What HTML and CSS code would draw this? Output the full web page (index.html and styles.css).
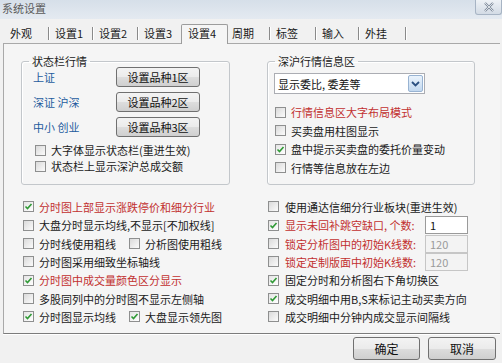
FILE: index.html
```html
<!DOCTYPE html>
<html lang="zh-CN">
<head>
    <meta charset="UTF-8">
    <title>系统设置</title>
    <link rel="stylesheet" href="styles.css">
</head>
<body>
<div class="window">
    <div class="titlebar">
        <span class="title">系统设置</span>
        <span class="close">
            <svg width="14" height="10" viewBox="0 0 14 10"><path d="M3 1 L11 9 M11 1 L3 9" stroke="#7d8a9a" stroke-width="2.2" fill="none"/><path d="M3 1 L11 9 M11 1 L3 9" stroke="#f4f6f8" stroke-width="0.8" fill="none"/></svg>
        </span>
    </div>

    <div class="tabs">
        <div class="tab">外观</div>
        <div class="tab">设置1</div>
        <div class="tab">设置2</div>
        <div class="tab">设置3</div>
        <div class="tab on">设置4</div>
        <div class="tab">周期</div>
        <div class="tab">标签</div>
        <div class="tab">输入</div>
        <div class="tab">外挂</div>
    </div>

    <div class="panel">
        <div class="groups">
            <fieldset class="group">
                <legend>状态栏行情</legend>
                <div class="gbody first">
                    <div class="pick"><span class="mkt">上证</span><span class="btn">设置品种1区</span></div>
                    <div class="pick"><span class="mkt">深证 沪深</span><span class="btn">设置品种2区</span></div>
                    <div class="pick"><span class="mkt">中小 创业</span><span class="btn">设置品种3区</span></div>
                    <div class="chkrow small"><span class="cb"></span>大字体显示状态栏(重进生效)</div>
                    <div class="chkrow small"><span class="cb"></span>状态栏上显示深沪总成交额</div>
                </div>
            </fieldset>
            <fieldset class="group">
                <legend>深沪行情信息区</legend>
                <div class="gbody second">
                    <div class="select">
                        <span class="seltext">显示委比, 委差等</span>
                        <span class="arrow"><svg width="9" height="6" viewBox="0 0 9 6"><path d="M1 1 L4.5 4.5 L8 1" stroke="#2a4f80" stroke-width="1.8" fill="none"/></svg></span>
                    </div>
                    <div class="chklist">
                        <div class="chkrow red"><span class="cb"></span>行情信息区大字布局模式</div>
                        <div class="chkrow"><span class="cb"></span>买卖盘用柱图显示</div>
                        <div class="chkrow"><span class="cb on"><svg width="9" height="9" viewBox="0 0 9 9"><path d="M1.5 4.5 L3.5 6.5 L7.5 2" stroke="#2f9a35" stroke-width="1.6" fill="none"/></svg></span>盘中提示买卖盘的委托价量变动</div>
                        <div class="chkrow"><span class="cb"></span>行情等信息放在左边</div>
                    </div>
                </div>
            </fieldset>
        </div>

        <div class="opts">
            <div class="col left">
                <div class="opt red"><span class="cb on"><svg width="9" height="9" viewBox="0 0 9 9"><path d="M1.5 4.5 L3.5 6.5 L7.5 2" stroke="#2f9a35" stroke-width="1.6" fill="none"/></svg></span>分时图上部显示涨跌停价和细分行业</div>
                <div class="opt"><span class="cb"></span>大盘分时显示均线,不显示[不加权线]</div>
                <div class="opt">
                    <span class="half"><span class="cb"></span>分时线使用粗线</span>
                    <span class="half"><span class="cb"></span>分析图使用粗线</span>
                </div>
                <div class="opt"><span class="cb"></span>分时图采用细致坐标轴线</div>
                <div class="opt red"><span class="cb on"><svg width="9" height="9" viewBox="0 0 9 9"><path d="M1.5 4.5 L3.5 6.5 L7.5 2" stroke="#2f9a35" stroke-width="1.6" fill="none"/></svg></span>分时图中成交量颜色区分显示</div>
                <div class="opt"><span class="cb"></span>多股同列中的分时图不显示左侧轴</div>
                <div class="opt">
                    <span class="half"><span class="cb on"><svg width="9" height="9" viewBox="0 0 9 9"><path d="M1.5 4.5 L3.5 6.5 L7.5 2" stroke="#2f9a35" stroke-width="1.6" fill="none"/></svg></span>分时图显示均线</span>
                    <span class="half"><span class="cb on"><svg width="9" height="9" viewBox="0 0 9 9"><path d="M1.5 4.5 L3.5 6.5 L7.5 2" stroke="#2f9a35" stroke-width="1.6" fill="none"/></svg></span>大盘显示领先图</span>
                </div>
            </div>
            <div class="col right">
                <div class="opt"><span class="cb"></span>使用通达信细分行业板块(重进生效)</div>
                <div class="opt red"><span class="cb on"><svg width="9" height="9" viewBox="0 0 9 9"><path d="M1.5 4.5 L3.5 6.5 L7.5 2" stroke="#2f9a35" stroke-width="1.6" fill="none"/></svg></span>显示未回补跳空缺口, 个数:<span class="num">1</span></div>
                <div class="opt red"><span class="cb"></span>锁定分析图中的初始K线数:<span class="num off">120</span></div>
                <div class="opt red"><span class="cb"></span>锁定定制版面中初始K线数:<span class="num off">120</span></div>
                <div class="opt"><span class="cb on"><svg width="9" height="9" viewBox="0 0 9 9"><path d="M1.5 4.5 L3.5 6.5 L7.5 2" stroke="#2f9a35" stroke-width="1.6" fill="none"/></svg></span>固定分时和分析图右下角切换区</div>
                <div class="opt"><span class="cb on"><svg width="9" height="9" viewBox="0 0 9 9"><path d="M1.5 4.5 L3.5 6.5 L7.5 2" stroke="#2f9a35" stroke-width="1.6" fill="none"/></svg></span>成交明细中用B,S来标记主动买卖方向</div>
                <div class="opt"><span class="cb"></span>成交明细中分钟内成交显示间隔线</div>
            </div>
        </div>
    </div>

    <div class="footer">
        <span class="btn big">确定</span>
        <span class="btn big wide">取消</span>
    </div>
</div>
</body>
</html>
```

FILE: styles.css
```css
body {
    margin: 0;
    font-family: "Noto Sans CJK SC", "Liberation Sans", sans-serif;
    font-size: 11px;
    color: #1a1a1a;
    background: #f0f0f0;
}

.window {
    width: 502px;
    height: 363px;
    overflow: hidden;
    background: #f1f1f1;
}

/* 标题栏 */
.titlebar {
    height: 19px;
    display: flex;
    justify-content: space-between;
    background: linear-gradient(#d6dfe9, #e4eaf1);
}

.title {
    padding-left: 2px;
    line-height: 17px;
    color: #5a5a5a;
}

.close {
    width: 27px;
    height: 15px;
    box-sizing: border-box;
    border: 1px solid #a7b4c4;
    border-top: none;
    border-radius: 0 0 3px 3px;
    background: linear-gradient(#eef2f6, #d3dbe5);
    display: flex;
    align-items: center;
    justify-content: center;
}

/* 选项卡 */
.tabs {
    height: 24px;
    display: flex;
    align-items: flex-end;
    padding-left: 3px;
}

.tab {
    width: 45px;
    box-sizing: border-box;
    height: 13px;
    line-height: 13px;
    margin-bottom: 3px;
    padding-left: 6px;
    border-right: 1px solid #8a8a8a;
    box-shadow: 1px 0 0 #fff;
}

.tab:nth-child(1) { width: 46px; padding-left: 7px; }
.tab:nth-child(2) { width: 44px; }
.tab:nth-child(4) { width: 44px; }
.tab:nth-child(6) { width: 42px; padding-left: 4px; }
.tab:nth-child(7) { width: 46px; }
.tab:nth-child(8) { width: 43px; }
.tab:nth-child(9) { width: 47px; }

.tab.on {
    position: relative;
    z-index: 1;
    width: 47px;
    height: 20px;
    line-height: 16px;
    margin-left: -1px;
    margin-bottom: -1px;
    border: 1px solid #9c9c9c;
    border-bottom: none;
    border-radius: 2px 2px 0 0;
    background: #f5f5f5;
    box-shadow: none;
}

/* 主面板 */
.panel {
    margin-left: 3px;
    width: 497px;
    height: 291px;
    box-sizing: border-box;
    border: 1px solid #a9a9a9;
    border-bottom-color: #7c7c7c;
    border-right: none;
    background: #f5f5f5;
    box-shadow: 0 1px 0 #fff;
}

.groups {
    display: flex;
    gap: 37px;
    margin: 11px 0 0 17px;
}

.group {
    width: 209px;
    box-sizing: border-box;
    margin: 0;
    padding: 0;
    min-width: 0;
    border: 1px solid #c3c7cb;
    border-radius: 3px;
    box-shadow: inset 1px 1px 0 #fff;
}

.group + .group {
    width: 208px;
}

.group legend {
    margin-left: 7px;
    padding: 0 3px;
    line-height: 12px;
    color: #222;
}

.gbody.first {
    padding: 0 0 7px 11px;
}

.gbody.second {
    padding: 6px 0 7px 6px;
}

.pick {
    display: flex;
    align-items: center;
    height: 20px;
    margin-bottom: 5px;
}

.mkt {
    width: 83px;
    color: #1f5c9e;
}

.btn {
    display: flex;
    align-items: center;
    justify-content: center;
    width: 84px;
    height: 20px;
    box-sizing: border-box;
    border: 1px solid #707070;
    border-radius: 3px;
    background: linear-gradient(#f3f3f3 0%, #ebebeb 50%, #dddddd 51%, #cfcfcf 100%);
    color: #111;
}

.chkrow {
    display: flex;
    align-items: center;
    height: 18.5px;
}

.chkrow.small {
    height: 16px;
    margin-left: 2px;
}

.chkrow.small:nth-of-type(4) {
    margin-top: 2px;
}

.cb {
    width: 11px;
    height: 11px;
    box-sizing: border-box;
    flex: none;
    margin-right: 5px;
    border: 1px solid #8e8f8f;
    background: linear-gradient(135deg, #dadada, #fbfbfb);
    display: flex;
    align-items: center;
    justify-content: center;
}

.cb.on {
    background: linear-gradient(135deg, #e4e4e4, #ffffff);
}

.red {
    color: #c2302f;
}

.select {
    width: 151px;
    height: 21px;
    box-sizing: border-box;
    border: 1px solid #abadb3;
    background: #fff;
    display: flex;
    align-items: center;
    justify-content: space-between;
    padding: 0 1px 0 3px;
}

.seltext {
    color: #111;
}

.arrow {
    width: 15px;
    height: 17px;
    box-sizing: border-box;
    border: 1px solid #98b3d2;
    border-radius: 2px;
    background: linear-gradient(#eaf3fc, #c2d8ef);
    display: flex;
    align-items: center;
    justify-content: center;
}

.chklist {
    margin: 8.75px 0 0 1px;
}

/* 下方选项 */
.opts {
    display: flex;
    margin: 13px 0 0 19px;
}

.col {
    display: flex;
    flex-direction: column;
}

.col.left {
    width: 245px;
}

.col.right {
    width: 200px;
}

.opt {
    display: flex;
    align-items: center;
    height: 18.33px;
    white-space: nowrap;
}

.col.right .cb {
    margin-right: 6px;
}

.half {
    display: flex;
    align-items: center;
    width: 106px;
}

.num {
    margin-left: auto;
    width: 43px;
    height: 18px;
    box-sizing: border-box;
    border: 1px solid #9a9a9a;
    background: #fff;
    color: #111;
    padding-left: 4px;
    line-height: 16px;
}

.num.off {
    border-color: #c6c6c6;
    background: #f3f3f3;
    color: #9a9a9a;
}

/* 底部按钮 */
.footer {
    display: flex;
    justify-content: flex-end;
    gap: 8px;
    padding: 3px 6px 0 0;
}

.btn.big {
    width: 67px;
    height: 23px;
    font-size: 12px;
}

.btn.big.wide {
    width: 68px;
}
```
